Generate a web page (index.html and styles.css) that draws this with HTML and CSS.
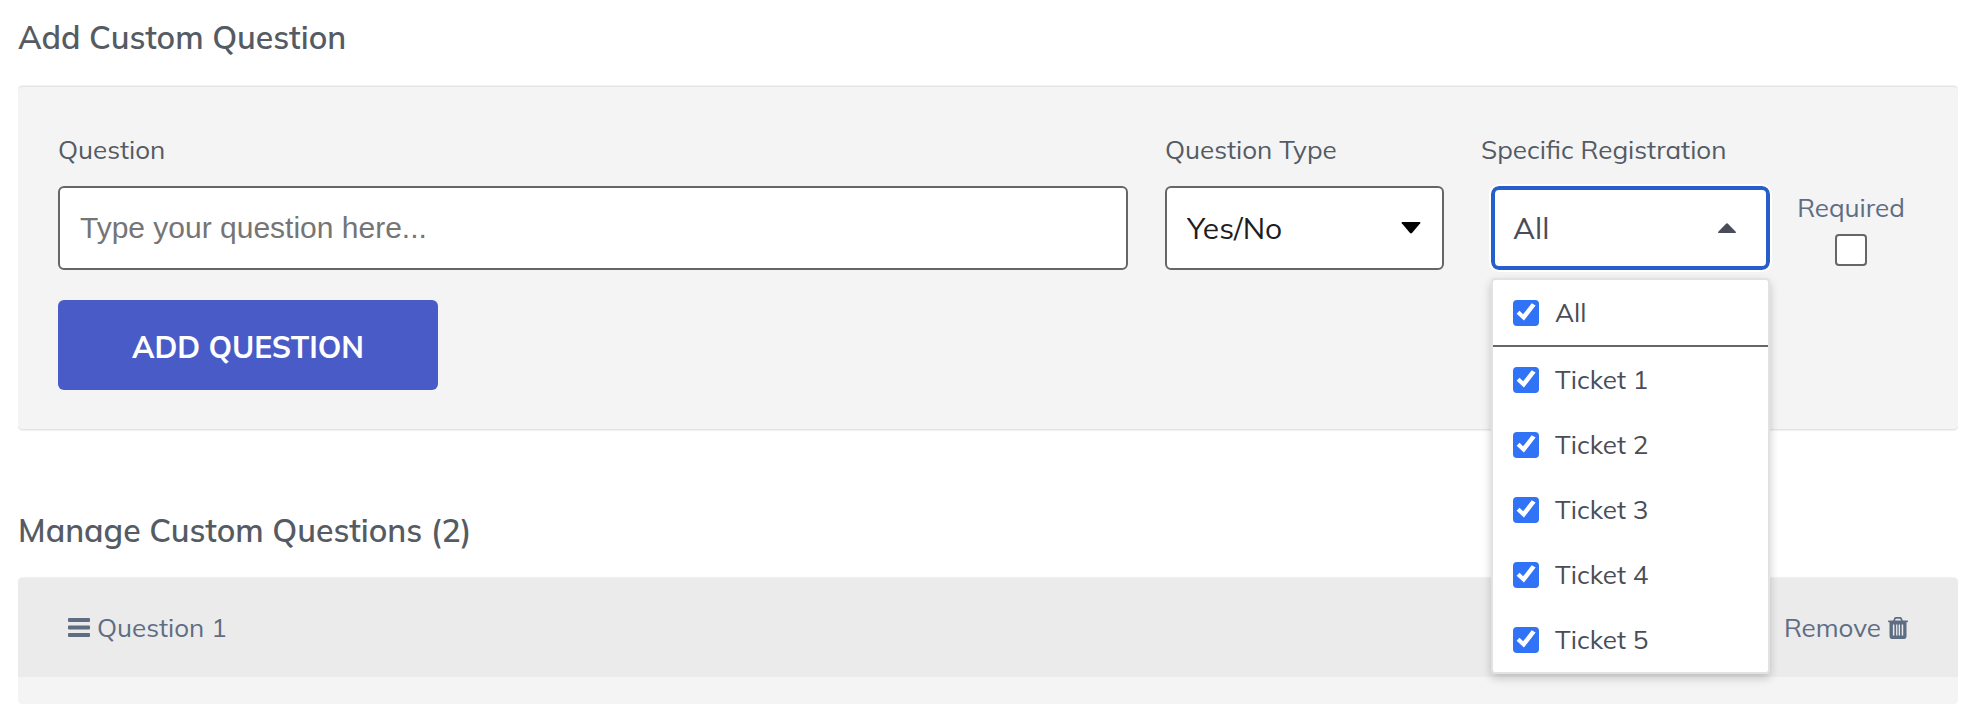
FILE: index.html
```html
<!DOCTYPE html>
<html lang="en">
<head>
<meta charset="utf-8">
<meta name="viewport" content="width=device-width, initial-scale=1">
<title>Custom Questions</title>
<link rel="stylesheet" href="styles.css">
</head>
<body>
<main class="page">
  <section>
    <h2 class="heading">Add Custom Question</h2>
    <form class="card">
      <div class="fields">
        <div class="field">
          <label class="label" for="question">Question</label>
          <input class="control text-input" id="question" type="text" placeholder="Type your question here...">
        </div>
        <div class="field">
          <label class="label" for="type">Question Type</label>
          <div class="select-wrap">
            <select class="control select" id="type">
              <option>Yes/No</option>
            </select>
            <svg class="select-arrow" viewBox="0 0 20 12" aria-hidden="true"><path d="M1.500 0h17q1.500 0 .7 1.200L11.200 10.800q-1.200 1.200-2.400 0L.8 1.200Q0 0 1.500 0z"/></svg>
          </div>
        </div>
        <div class="field field-registration">
          <label class="label" for="registration">Specific Registration</label>
          <div class="multi">
            <button class="control multi-toggle" id="registration" type="button" aria-expanded="true" aria-controls="tickets">
              <span>All</span>
              <svg class="multi-arrow" viewBox="0 0 18 10" aria-hidden="true"><path d="M1.200 10h15.600q1.800 0 .7-1.500L10.200.9q-1.200-1.200-2.400 0L.5 8.500Q-.6 10 1.200 10z"/></svg>
            </button>
            <div class="menu" id="tickets">
              <label class="option option-all"><input class="check" type="checkbox" checked>All</label>
              <label class="option"><input class="check" type="checkbox" checked>Ticket 1</label>
              <label class="option"><input class="check" type="checkbox" checked>Ticket 2</label>
              <label class="option"><input class="check" type="checkbox" checked>Ticket 3</label>
              <label class="option"><input class="check" type="checkbox" checked>Ticket 4</label>
              <label class="option"><input class="check" type="checkbox" checked>Ticket 5</label>
            </div>
          </div>
        </div>
        <div class="field-required">
          <label for="required">Required</label>
          <input class="required-box" id="required" type="checkbox">
        </div>
      </div>
      <button class="submit" type="submit">ADD QUESTION</button>
    </form>
  </section>
  <section class="manage">
    <h2 class="heading">Manage Custom Questions (2)</h2>
    <div class="panel">
      <div class="row">
        <div class="row-title">
          <svg class="icon-bars" viewBox="0 0 22 20" aria-hidden="true"><path d="M1 0h20q1 0 1 1v2q0 1-1 1H1Q0 4 0 3V1q0-1 1-1zM1 7.500h20q1 0 1 1v2q0 1-1 1H1q-1 0-1-1v-2q0-1 1-1zM1 15h20q1 0 1 1v2q0 1-1 1H1q-1 0-1-1v-2q0-1 1-1z"/></svg>
          <span>Question 1</span>
        </div>
        <button class="remove" type="button">
          <span>Remove</span>
          <svg class="icon-trash" viewBox="0 0 20 22" aria-hidden="true"><path fill-rule="evenodd" d="M5.200 3.500 6 1.400Q6.500 0 8 0h4q1.500 0 2 1.400l.8 2.100h4.400q.8 0 .8.600v.4q0 .7-.8.700h-.7V19q0 3-2.500 3H4q-2.500 0-2.500-3V5.200H.8Q0 5.200 0 4.500v-.4q0-.6.8-.6zM7 3.500h6l-.5-1.300q-.2-.5-.7-.5H8.200q-.5 0-.7.500zM4.900 7.500v11h1.500v-11zM8.100 7.500v11h1.300v-11zM10.700 7.500v11H12v-11zM13.700 7.500v11h1.500v-11z"/></svg>
        </button>
      </div>
      <div class="row-body"></div>
    </div>
  </section>
</main>
</body>
</html>
```
FILE: styles.css
```css
* {
  box-sizing: border-box;
}

body {
  margin: 0;
  background: #fff;
  color: #555b63;
  font-family: Mulish, Lato, "Open Sans", sans-serif;
  font-size: 26px;
  line-height: 32px;
}

.page {
  padding: 17px 12px 0 18px;
}

.heading {
  margin: 0 0 29px;
  font-size: 32px;
  font-weight: 600;
  line-height: 40px;
}

.card {
  padding: 48px 40px 40px;
  border-radius: 4px;
  background: #f4f4f4;
  box-shadow: inset 0 1px #e4e4e4, inset 0 -1px #e4e4e4, 0 2px 2px -2px rgba(0, 0, 0, 0.2), 0 -2px 2px -2px rgba(0, 0, 0, 0.2);
}

.fields {
  display: grid;
  grid-template-columns: minmax(0, 1fr) 316px 303px 134px;
  margin-bottom: 30px;
}

.field {
  display: flex;
  flex-direction: column;
  gap: 20px;
  padding-right: 37px;
}

.field-registration {
  padding-right: 14px;
}

.control {
  width: 100%;
  height: 84px;
  border: 2px solid #666;
  border-radius: 6px;
  background: #fff;
  font-size: 30px;
}

.text-input {
  padding: 0 20px;
  font-family: "Liberation Sans", Arial, sans-serif;
}

.text-input::placeholder {
  color: #757575;
}

.select-wrap,
.multi {
  position: relative;
}

.select {
  padding: 0 60px 0 20px;
  appearance: none;
  color: #1d1d1f;
  font-family: inherit;
}

.select-arrow {
  position: absolute;
  top: 36px;
  right: 23px;
  width: 20px;
  height: 12px;
  pointer-events: none;
}

.multi {
  margin-left: 10px;
}

.multi-toggle {
  display: flex;
  align-items: center;
  justify-content: space-between;
  padding: 0 30px 0 18px;
  border: 4px solid #265fc9;
  border-radius: 8px;
  outline: 2px solid #fff;
  color: #4a4d57;
  font-family: inherit;
}

.multi-arrow {
  width: 18px;
  height: 10px;
  fill: currentColor;
}

.menu {
  position: absolute;
  z-index: 1;
  top: calc(100% + 8px);
  left: 0;
  width: 100%;
  border: 2px solid #e2e2e2;
  border-radius: 4px;
  background: #fff;
  box-shadow: 0 4px 10px rgba(0, 0, 0, 0.2);
  color: #4a4d57;
}

.option {
  display: flex;
  align-items: center;
  gap: 16px;
  height: 65px;
  padding-left: 20px;
}

.option-all {
  height: 67px;
  border-bottom: 2px solid #666;
}

.check {
  display: grid;
  width: 26px;
  height: 26px;
  margin: 0;
  border-radius: 4px;
  appearance: none;
  background: #3173f6;
}

.check:checked::before {
  width: 26px;
  height: 26px;
  background: #fff;
  clip-path: polygon(14% 55%, 25% 43%, 39% 57%, 72% 14%, 87% 23%, 42% 81%);
  content: "";
}

.field-required {
  display: flex;
  flex-direction: column;
  align-items: center;
  gap: 10px;
  padding-top: 58px;
  color: #5f6d83;
}

.required-box {
  width: 32px;
  height: 32px;
  margin: 0;
  border: 2px solid #666;
  border-radius: 4px;
  appearance: none;
  background: #fff;
}

.submit {
  display: block;
  width: 380px;
  height: 90px;
  padding: 3px 0 0;
  border: 0;
  border-radius: 6px;
  background: #495bc7;
  color: #fff;
  font-family: inherit;
  font-size: 30px;
  font-weight: 700;
}

.manage {
  margin-top: 80px;
}

.manage .heading {
  margin-bottom: 28px;
}

.panel {
  border-radius: 4px;
  background: #f4f4f4;
  box-shadow: 0 -2px 2px -2px rgba(0, 0, 0, 0.2);
}

.row {
  display: flex;
  align-items: center;
  justify-content: space-between;
  padding: 34px 50px 33px;
  border-radius: 4px 4px 0 0;
  background: #ebebeb;
  color: #5f6d83;
}

.row-title,
.remove {
  display: flex;
  align-items: center;
  gap: 7px;
}

.remove {
  padding: 0;
  border: 0;
  background: none;
  color: inherit;
  font: inherit;
}

.icon-bars {
  width: 22px;
  height: 20px;
  fill: currentColor;
}

.icon-trash {
  width: 20px;
  height: 22px;
  fill: currentColor;
}

.row-body {
  height: 27px;
}

@media (max-width: 1200px) {
  .fields {
    grid-template-columns: 1fr 1fr;
    row-gap: 24px;
  }
}
```
